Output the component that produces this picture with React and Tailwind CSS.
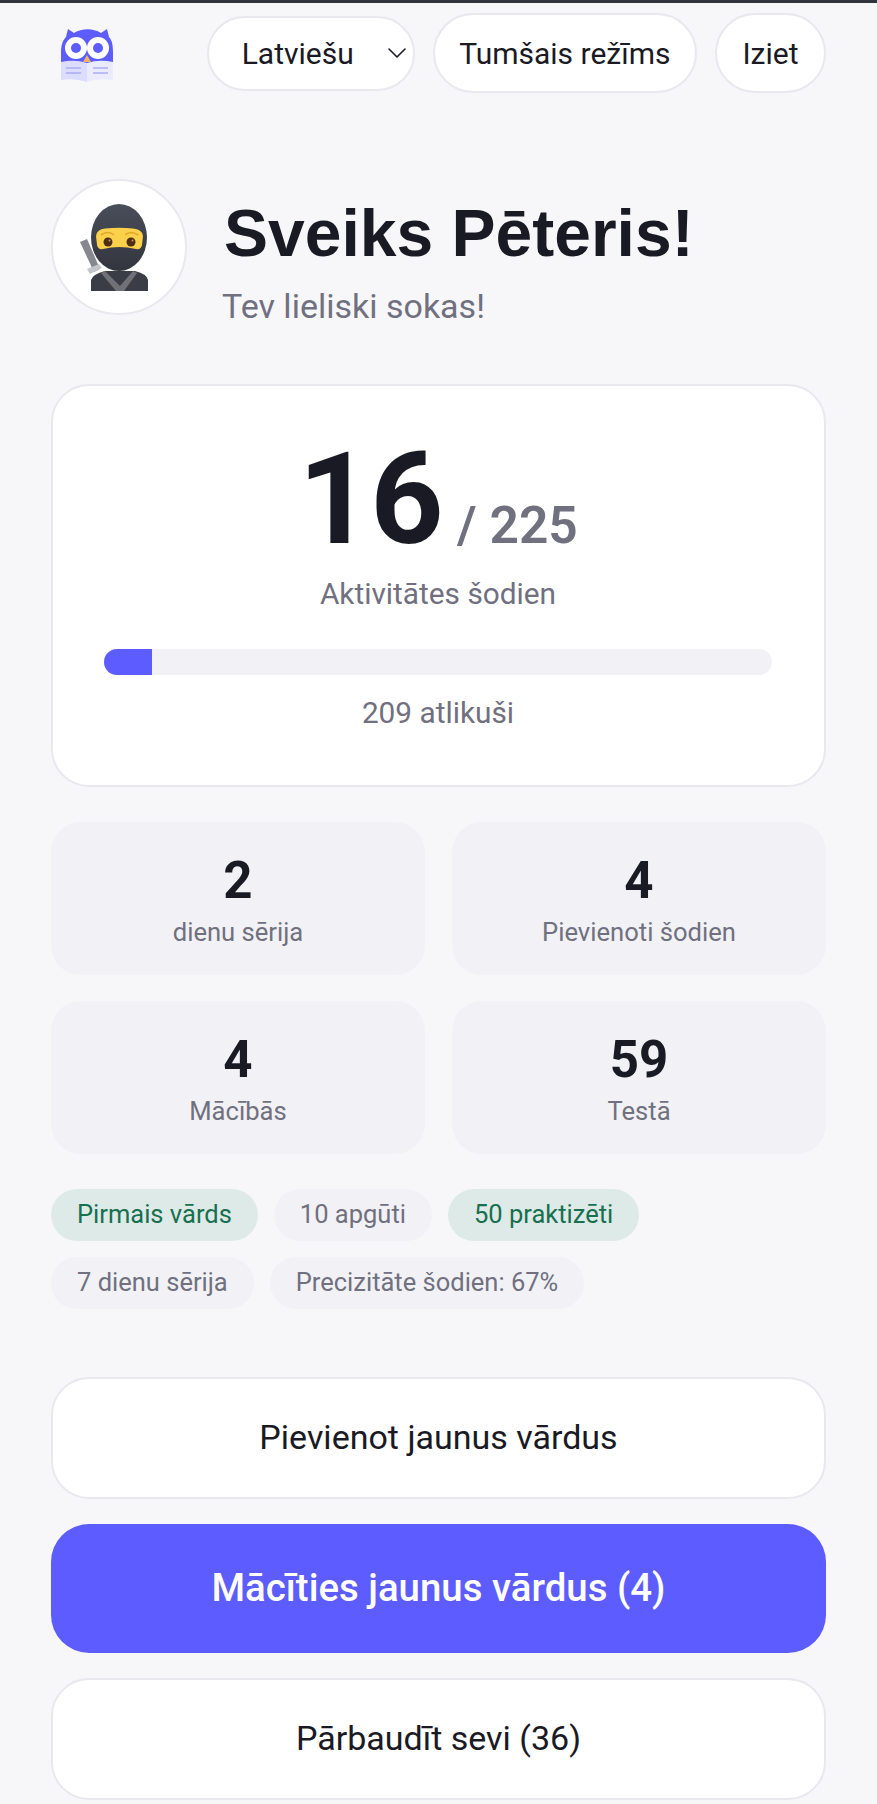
import { ChevronDown } from 'lucide-react'

const OWL_BLUE = '#5c5cff'

function OwlLogo() {
  return (
    <svg width="53" height="54" viewBox="0 0 53 54" className="block mt-[4px]">
      <path d="M0 36 L0 24 C0 17 2 12 5 9 L7 1 L13 5 C21 0 32 0 40 5 L46 1 L48 9 C51 12 52 17 52 24 L52 36 Z" fill={OWL_BLUE} />
      <circle cx="15" cy="20" r="11" fill="#fff" />
      <circle cx="37" cy="20" r="11" fill="#fff" />
      <circle cx="15" cy="20" r="5" fill={OWL_BLUE} />
      <circle cx="37" cy="20" r="5" fill={OWL_BLUE} />
      <path d="M0 34 Q14 31 26 35 L26 54 Q14 50 0 52 Z" fill="#dcdcfd" />
      <path d="M26 35 Q38 31 52 34 L52 52 Q38 50 26 54 Z" fill="#ebebfe" />
      <path d="M22 34 L26 27 L30 34 Z" fill="#f3b069" />
      <path d="M5 40 H20 M5 45 H20 M32 40 H47 M32 45 H47" stroke="#acacf5" strokeWidth="1.5" />
    </svg>
  )
}

function NinjaEmoji() {
  return (
    <svg width="68" height="87" viewBox="0 0 68 87" className="block">
      <defs>
        <linearGradient id="hood" x1="0" y1="0" x2="0" y2="1">
          <stop offset="0" stopColor="#4a4e5a" />
          <stop offset="1" stopColor="#32353e" />
        </linearGradient>
      </defs>
      <path d="M11 87 L11 76 Q13 70 25 67 L55 67 Q67 70 68 76 L68 87 Z" fill="#3a3d45" />
      <path d="M25 67 L40 82 L53 67 L57 69 L44 87 L36 87 L21 69 Z" fill="#6f7177" />
      <path d="M0 38 L7 35 L20 65 L14 68 Z" fill="#85888f" />
      <path d="M7 65 L19 60 L22 64 L10 70 Z" fill="#c4c6c9" />
      <ellipse cx="39" cy="33.5" rx="28" ry="33.5" fill="url(#hood)" />
      <path d="M16 32 Q17 25 25 24.5 Q39 23 53 24.5 Q62 25 63 32 L62 41 Q61 46 56 45 Q39 41 23 45 Q18 46 17 41 Z" fill="#fbd04a" />
      <circle cx="28" cy="38" r="4.5" fill="#4f2f12" />
      <circle cx="51" cy="38" r="4.5" fill="#4f2f12" />
      <circle cx="29.5" cy="36.5" r="1" fill="#c99a6a" />
      <circle cx="52.5" cy="36.5" r="1" fill="#c99a6a" />
      <path d="M21 31 Q28 26 34 31 M45 31 Q51 26 58 31" stroke="#e0a52a" strokeWidth="1.6" fill="none" />
    </svg>
  )
}

function StatCard({ value, label }) {
  return (
    <div className="h-[153px] rounded-[30px] bg-[#f2f2f6] flex flex-col items-center pt-[29px]">
      <div className="text-[51px] leading-[60px] font-bold text-[#1a1a24]">{value}</div>
      <div className="text-[25.6px] leading-[30px] mt-[6px] text-[#70707f]">{label}</div>
    </div>
  )
}

function Chip({ children, green }) {
  return (
    <span
      className={
        green
          ? 'h-[52px] flex items-center px-[26px] pb-[2px] rounded-full text-[25.5px] bg-[#deeae8] text-[#17704f]'
          : 'h-[52px] flex items-center px-[26px] pb-[2px] rounded-full text-[25.5px] bg-[#f2f2f6] text-[#70707f]'
      }
    >
      {children}
    </span>
  )
}

export default function App() {
  return (
    <div className="w-[877px] h-[1804px] overflow-hidden bg-[#f7f7fa] font-['Roboto',sans-serif] text-[#1a1a24]">
      <div className="h-[3px] bg-[#33333d]" />

      {/* Header */}
      <div className="flex items-center h-[76px] mt-[12px] pl-[61px] pr-[51px]">
        <OwlLogo />
        <div className="ml-auto flex items-center gap-[18px]">
          <button className="w-[208px] h-[75px] bg-white border-2 border-[#e8e8ee] rounded-full flex items-center pl-[33px] text-[30px]">
            Latviešu
            <ChevronDown className="ml-auto" size={32} strokeWidth={1.2} />
          </button>
          <button className="h-[80px] px-[24.5px] bg-white border-2 border-[#e8e8ee] rounded-full text-[30px]">Tumšais režīms</button>
          <button className="h-[80px] px-[25.5px] bg-white border-2 border-[#e8e8ee] rounded-full text-[30px]">Iziet</button>
        </div>
      </div>

      <div className="px-[51px]">
        {/* Greeting */}
        <div className="flex items-start mt-[88px]">
          <div className="w-[136px] h-[136px] bg-white border-2 border-[#e8e8ee] rounded-full flex items-center justify-center shrink-0">
            <div className="mr-[11px]">
              <NinjaEmoji />
            </div>
          </div>
          <div className="ml-[37px] pt-[17px]">
            <div className="font-['Liberation_Sans',sans-serif] font-bold text-[66px] leading-[74px] text-[#1a1a24]">Sveiks Pēteris!</div>
            <div className="text-[34px] leading-[42px] mt-[15px] -ml-[2px] text-[#70707f]">Tev lieliski sokas!</div>
          </div>
        </div>

        {/* Daily progress */}
        <div className="mt-[57px] h-[403px] bg-white border-2 border-[#e8e8ee] rounded-[38px] pl-[51px] pr-[52px] pt-[48px] flex flex-col items-center">
          <div className="flex items-baseline leading-none">
            <span className="text-[128px] leading-[130px] font-bold tracking-[-1.5px] text-[#1a1a24]">16</span>
            <span className="text-[51.5px] font-semibold text-[#70707f] ml-[15px]">/ 225</span>
          </div>
          <div className="text-[29.8px] leading-[36px] mt-[12px] text-[#70707f]">Aktivitātes šodien</div>
          <div className="w-full h-[26px] rounded-full bg-[#f2f2f6] mt-[37px] overflow-hidden">
            <div className="h-full bg-[#5c5cff]" style={{ width: `${(16 / 225) * 100}%` }} />
          </div>
          <div className="text-[29.8px] leading-[36px] mt-[20px] text-[#70707f]">209 atlikuši</div>
        </div>

        {/* Stats */}
        <div className="grid grid-cols-2 gap-x-[27px] gap-y-[26px] mt-[35px]">
          <StatCard value="2" label="dienu sērija" />
          <StatCard value="4" label="Pievienoti šodien" />
          <StatCard value="4" label="Mācībās" />
          <StatCard value="59" label="Testā" />
        </div>

        {/* Badges */}
        <div className="flex flex-wrap gap-x-[16px] gap-y-[16px] mt-[35px]">
          <Chip green>Pirmais vārds</Chip>
          <Chip>10 apgūti</Chip>
          <Chip green>50 praktizēti</Chip>
          <Chip>7 dienu sērija</Chip>
          <Chip>Precizitāte šodien: 67%</Chip>
        </div>

        {/* Actions */}
        <div className="flex flex-col gap-[25px] mt-[68px]">
          <button className="h-[122px] pb-[2px] bg-white border-2 border-[#e8e8ee] rounded-[38px] text-[34px]">Pievienot jaunus vārdus</button>
          <button className="h-[129px] pb-[2px] bg-[#5c5cff] rounded-[38px] text-[38.4px] font-medium text-white">Mācīties jaunus vārdus (4)</button>
          <button className="h-[122px] pb-[2px] bg-white border-2 border-[#e8e8ee] rounded-[38px] text-[34px]">Pārbaudīt sevi (36)</button>
        </div>
      </div>
    </div>
  )
}
